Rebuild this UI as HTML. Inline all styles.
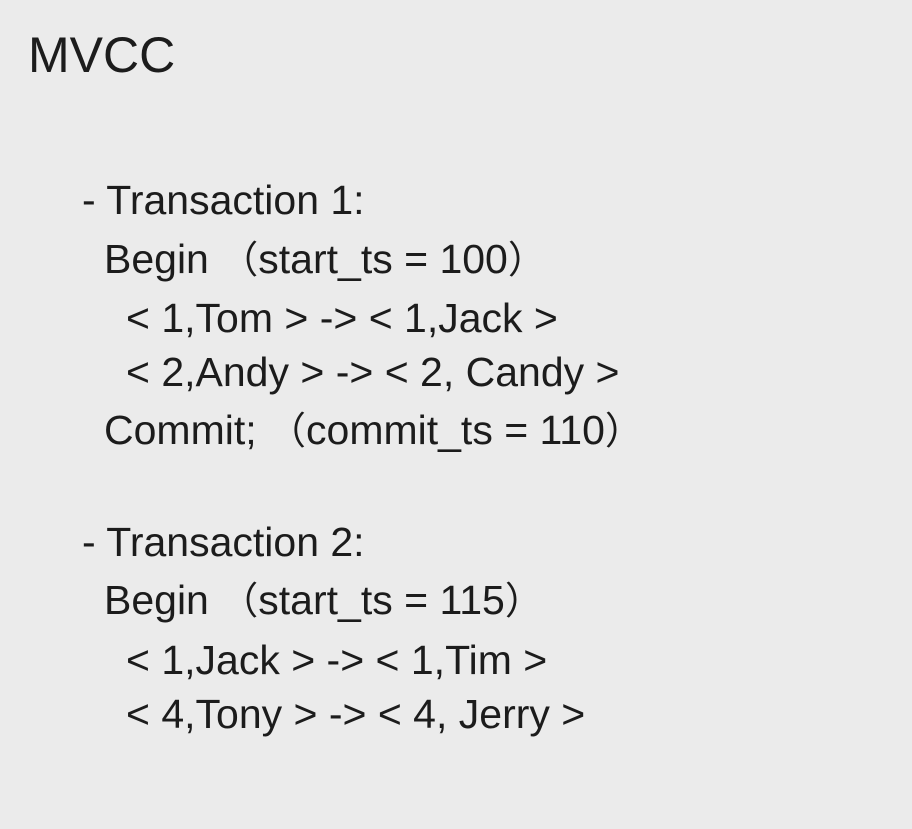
<!DOCTYPE html>
<html><head><meta charset="utf-8"><style>
html,body{margin:0;padding:0}
body{width:912px;height:829px;background:#ebebeb;position:relative;overflow:hidden;color:#1c1c1c;font-family:"Liberation Sans","Noto Sans CJK SC",sans-serif}
.l{position:absolute;font-size:41px;line-height:40px;white-space:pre}
.t{position:absolute;left:28px;top:30px;font-size:50px;line-height:50px}
.p{font-size:38px}
</style></head><body>
<div class="t">MVCC</div>
<div class="l" style="left:82px;top:180px">- Transaction 1:</div>
<div class="l" style="left:104px;top:239px">Begin <span class="p">（</span>start_ts = 100<span class="p">）</span></div>
<div class="l" style="left:126px;top:298px">&lt; 1,Tom &gt; -&gt; &lt; 1,Jack &gt;</div>
<div class="l" style="left:126px;top:352px">&lt; 2,Andy &gt; -&gt; &lt; 2, Candy &gt;</div>
<div class="l" style="left:104px;top:410px">Commit; <span class="p">（</span>commit_ts = 110<span class="p">）</span></div>
<div class="l" style="left:82px;top:522px">- Transaction 2:</div>
<div class="l" style="left:104px;top:580px">Begin <span class="p">（</span>start_ts = 115<span class="p">）</span></div>
<div class="l" style="left:126px;top:640px">&lt; 1,Jack &gt; -&gt; &lt; 1,Tim &gt;</div>
<div class="l" style="left:126px;top:694px">&lt; 4,Tony &gt; -&gt; &lt; 4, Jerry &gt;</div>
</body></html>
